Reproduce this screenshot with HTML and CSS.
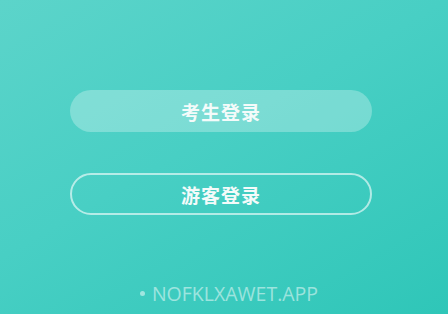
FILE: index.html
```html
<!DOCTYPE html>
<html lang="zh-CN">
<head>
<meta charset="utf-8">
<link rel="stylesheet" href="styles.css">
</head>
<body>
<main class="screen">
  <div class="actions">
    <button class="btn btn-fill">考生登录</button>
    <button class="btn btn-outline">游客登录</button>
  </div>
  <footer class="footer"><span class="dot"></span>NOFKLXAWET.APP</footer>
</main>
</body>
</html>
```
FILE: styles.css
```css
html, body {
  margin: 0;
  padding: 0;
  width: 448px;
  height: 314px;
  overflow: hidden;
}
.screen {
  width: 448px;
  height: 314px;
  box-sizing: border-box;
  background: linear-gradient(150deg, #5cd4ca 0%, #48cfc4 45%, #2fc6b8 100%);
  display: flex;
  flex-direction: column;
  align-items: center;
  padding-top: 90px;
  padding-right: 6px;
}
.actions {
  display: flex;
  flex-direction: column;
  gap: 41px;
}
.btn {
  width: 302px;
  height: 42px;
  border-radius: 21px;
  box-sizing: border-box;
  font-family: "Noto Sans CJK SC", sans-serif;
  font-weight: 700;
  font-size: 19px;
  color: #f4fbfa;
  letter-spacing: 1px;
  display: flex;
  align-items: center;
  justify-content: center;
  padding: 0;
  cursor: pointer;
}
.btn-fill {
  background: rgba(255,255,255,0.28);
  border: none;
}
.btn-outline {
  background: transparent;
  border: 2px solid rgba(255,255,255,0.6);
}
.footer {
  margin-top: 65px;
  font-family: "Open Sans", sans-serif;
  font-size: 19.5px;
  color: rgba(255,255,255,0.5);
  display: flex;
  align-items: center;
  gap: 7px;
  margin-left: 16px;
}
.dot {
  width: 5px;
  height: 5px;
  border-radius: 50%;
  background: rgba(255,255,255,0.5);
}
```
